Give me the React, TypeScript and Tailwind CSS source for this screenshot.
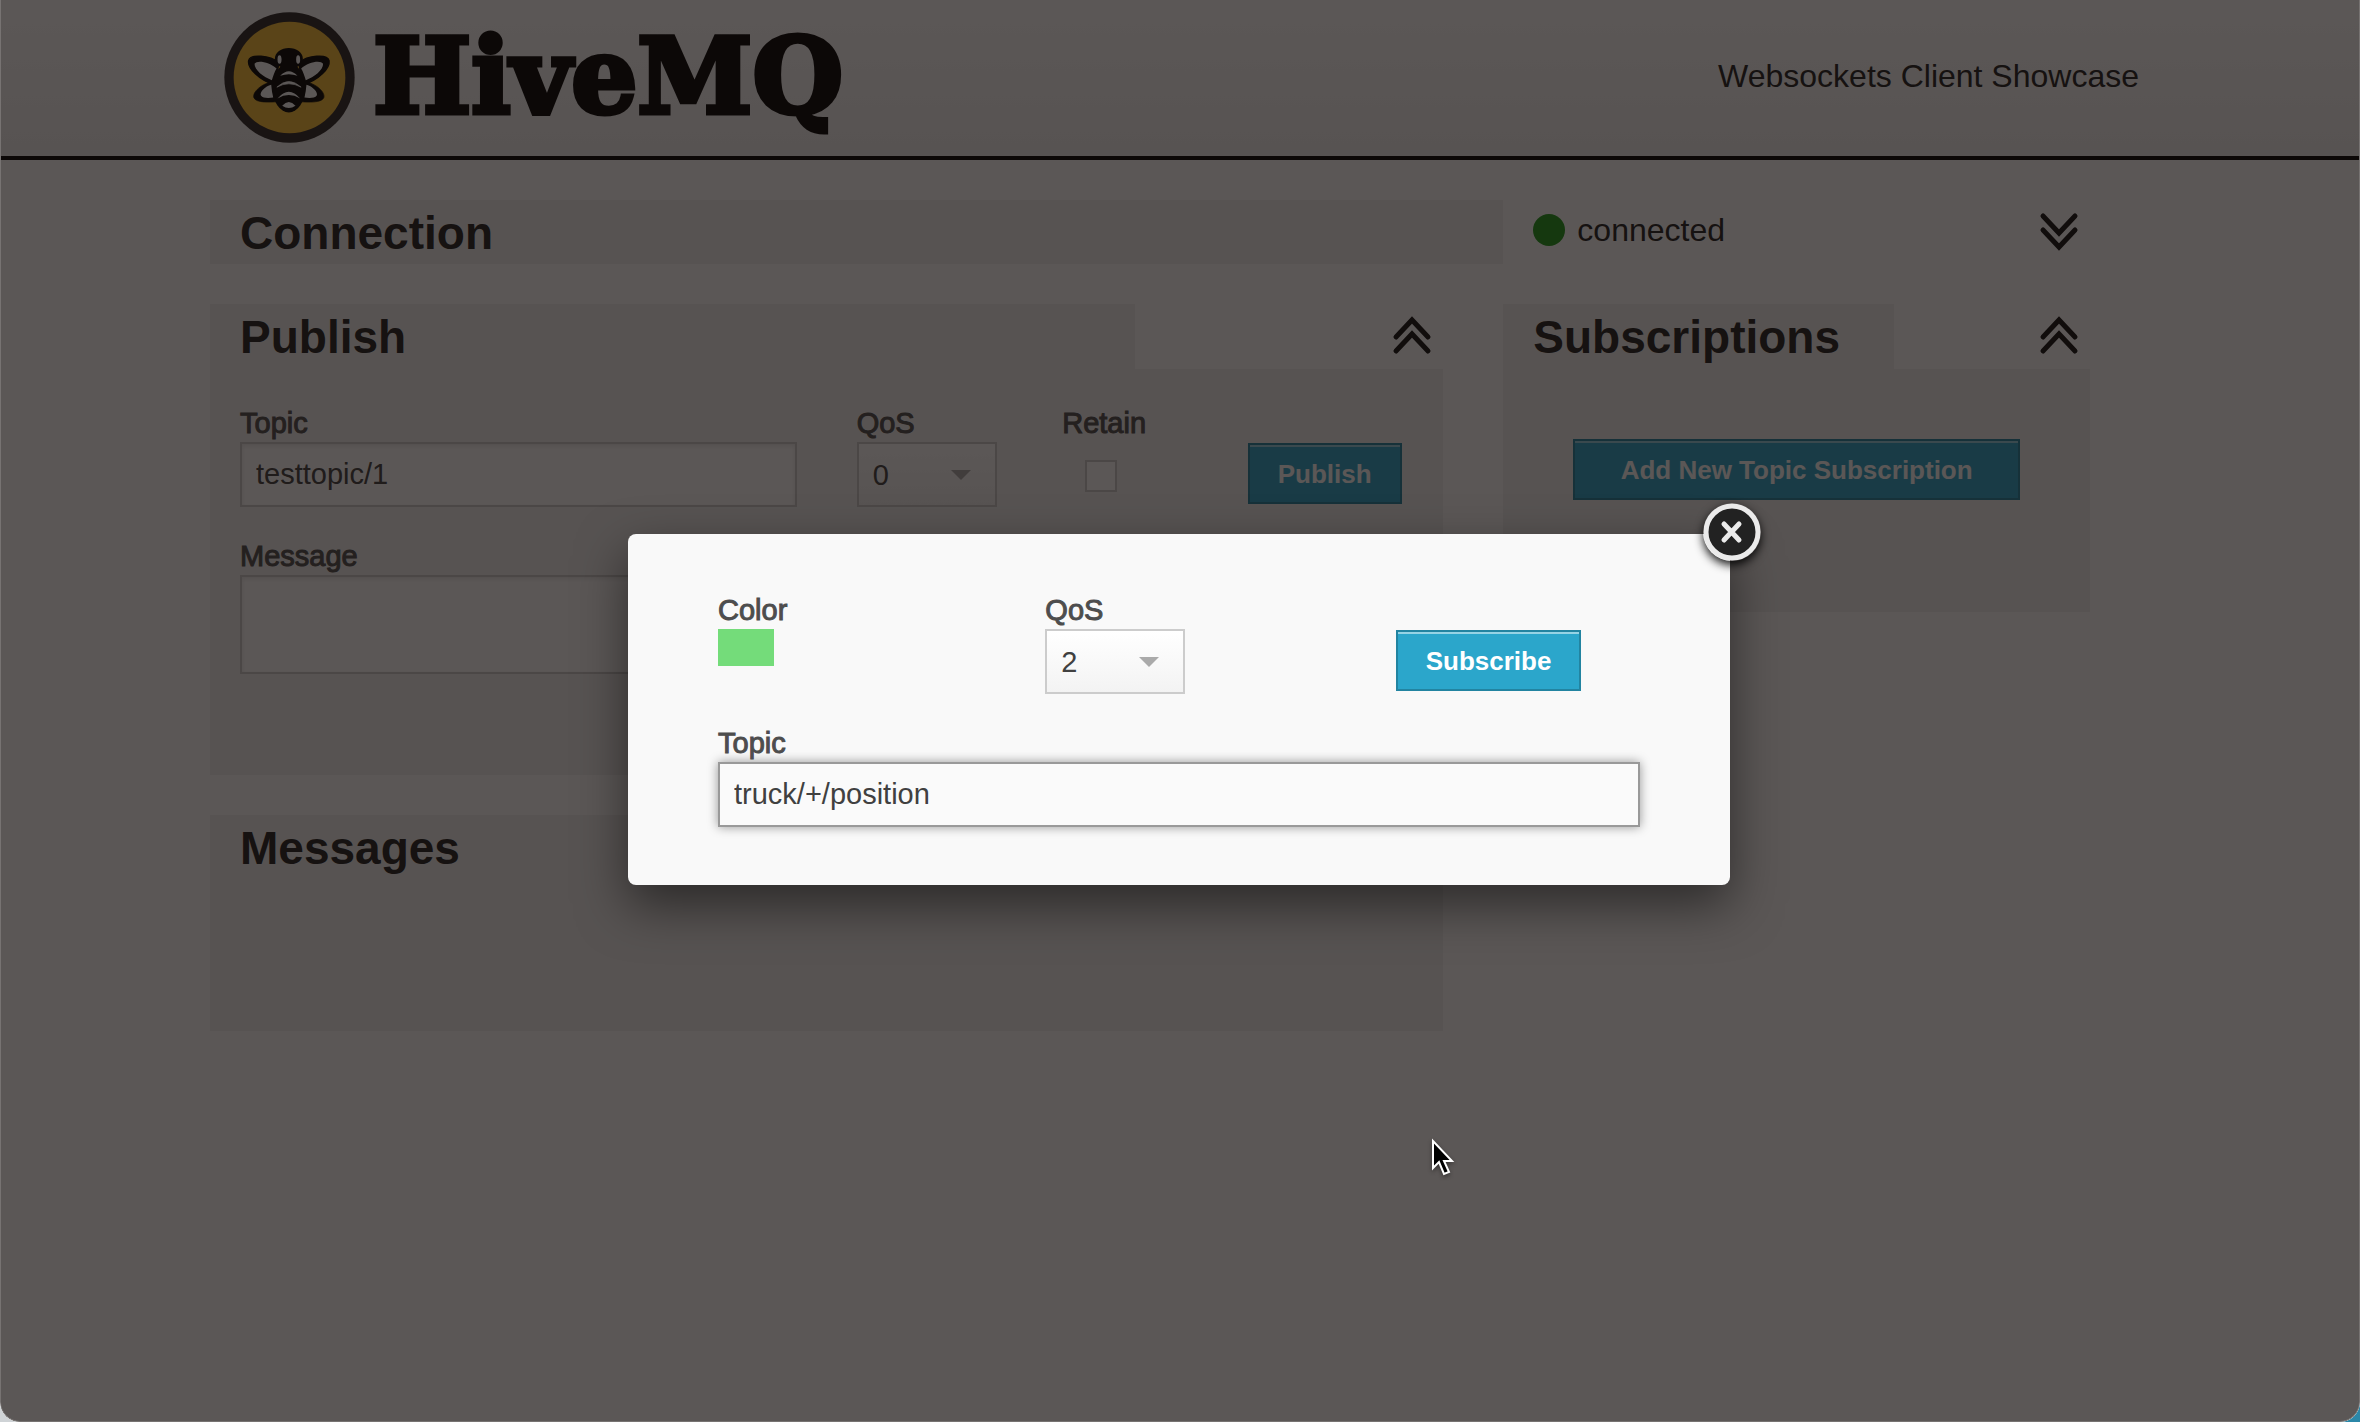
import React from "react";

const inputClass =
  "block w-full rounded-none border-2 border-[#ccc] bg-white px-[14px] text-[29px] text-[#404040] shadow-[inset_0_2px_4px_rgba(0,0,0,0.1)] outline-none";
const buttonClass =
  "h-[61px] border-2 border-[#2284a1] bg-[#2ba6cb] px-7 text-[26px] font-bold leading-none text-white shadow-[inset_0_2px_0_rgba(255,255,255,0.5)] whitespace-nowrap";

function Label({ htmlFor, children }: { htmlFor: string; children: React.ReactNode }) {
  return (
    <label
      htmlFor={htmlFor}
      className="block w-fit text-[29px] leading-[38px] text-[#4d4d4d] [-webkit-text-stroke:1px_#4d4d4d]"
    >
      {children}
    </label>
  );
}

function QosSelect({ id, value }: { id: string; value: string }) {
  return (
    <div className="relative w-[140px]">
      <select
        id={id}
        defaultValue={value}
        className="block h-[65px] w-full appearance-none rounded-none border-2 border-[#ccc] bg-linear-to-b from-white to-[#f3f3f3] pl-[14px] pt-[2px] text-[29px] text-[#404040] outline-none"
      >
        <option>0</option>
        <option>1</option>
        <option>2</option>
      </select>
      <svg
        className="pointer-events-none absolute right-[26px] top-[28px] h-[10px] w-[20px]"
        viewBox="0 0 20 10"
        aria-hidden="true"
      >
        <path d="M0 0H20L10 10Z" fill="#aaa" />
      </svg>
    </div>
  );
}

function Chevrons({ down = false, label }: { down?: boolean; label: string }) {
  return (
    <button type="button" aria-label={label} className="block">
      <svg
        className="h-[40px] w-[40px]"
        viewBox="0 0 40 40"
        fill="none"
        stroke="#111"
        strokeWidth="5"
        strokeLinecap="round"
      >
        {down ? (
          <path d="M4 4L20 21L36 4M4 18L20 35L36 18" />
        ) : (
          <path d="M4 22L20 5L36 22M4 36L20 19L36 36" />
        )}
      </svg>
    </button>
  );
}

function Wings() {
  return (
    <>
      <path
        d="M192 172C165 150 106 145 101 166C97 188 132 226 182 240Z"
        fill="#000"
        stroke="#000"
        strokeWidth="4"
      />
      <path
        d="M185 190C165 171 126 163 119 176C118 194 146 217 171 225C175 212 179 200 185 190Z"
        fill="#fff"
      />
      <path
        d="M178 228C140 234 111 262 117 278C124 294 165 291 186 290Z"
        fill="#000"
        stroke="#000"
        strokeWidth="2"
      />
      <path
        d="M169 239C151 243 133 262 138 271C144 280 163 279 175 277C172 265 170 252 169 239Z"
        fill="#fff"
      />
    </>
  );
}

function Bee() {
  return (
    <svg className="h-[131px] w-[131px] shrink-0" viewBox="27 20 394 394" aria-hidden="true">
      <circle cx="224" cy="217" r="196" fill="#2b2727" />
      <circle cx="224" cy="217" r="168" fill="#fbc137" />
      <Wings />
      <g transform="translate(444 0) scale(-1 1)">
        <Wings />
      </g>
      <ellipse cx="222" cy="160" rx="42" ry="32" fill="#000" />
      <ellipse cx="194" cy="163" rx="6" ry="13" fill="#fff" />
      <ellipse cx="250" cy="163" rx="6" ry="13" fill="#fff" />
      <ellipse cx="222" cy="248" rx="49" ry="74" fill="#000" />
      <path d="M196 212Q222 184 248 212Q222 202 196 212Z" fill="#fff" />
      <path d="M186 246Q222 212 259 246Q222 226 186 246Z" fill="#fff" stroke="#fff" strokeWidth="2" />
      <path d="M188 280Q222 240 256 280Q222 260 188 280Z" fill="#fff" />
      <path d="M202 302Q222 280 242 302Q222 316 202 302Z" fill="#fff" />
    </svg>
  );
}

function Heading({ children }: { children: React.ReactNode }) {
  return <h2 className="text-[46px] font-bold leading-[67px] text-[#222]">{children}</h2>;
}

function Header() {
  return (
    <header className="border-b-4 border-black bg-linear-to-b from-white to-[#f2f2f2]">
      <div className="mx-auto flex h-[156px] max-w-[1940px] items-center justify-between pl-[14px] pr-[11px]">
        <a href="#" className="flex items-center gap-[18px] pb-[2px]">
          <Bee />
          <span className="font-['DejaVu_Serif',serif] text-[104px] font-bold leading-none text-black [-webkit-text-stroke:5px_#000]">
            HiveMQ
          </span>
        </a>
        <p className="pb-1 text-[32px] text-[#222]">Websockets Client Showcase</p>
      </div>
    </header>
  );
}

function Page() {
  return (
    <div className="min-h-screen bg-white">
      <Header />
      <main className="mx-auto grid max-w-[1940px] grid-cols-3 gap-y-10 pt-10">
        <section className="col-span-3 grid grid-cols-3">
          <div className="col-span-2 h-[64px] bg-[#f2f2f2] px-[30px]">
            <Heading>Connection</Heading>
          </div>
          <div className="flex items-center justify-between pl-[30px] pr-[71px]">
            <div className="flex items-center gap-3 pb-1">
              <span className="h-8 w-8 rounded-full bg-[#1f9b1b]" />
              <span className="text-[32px] leading-none text-[#222]">connected</span>
            </div>
            <Chevrons down label="Show connection" />
          </div>
        </section>

        <div className="col-span-2 space-y-10 pr-[60px]">
          <section>
            <div className="flex justify-between">
              <div className="h-[65px] w-3/4 bg-[#f2f2f2] px-[30px]">
                <Heading>Publish</Heading>
              </div>
              <div className="pr-[11px] pt-[11px]">
                <Chevrons label="Hide publish" />
              </div>
            </div>
            <form className="grid min-h-[406px] grid-cols-12 content-start gap-y-[30px] bg-[#f2f2f2] pt-[35px]">
              <div className="col-span-6 px-[30px]">
                <Label htmlFor="pub-topic">Topic</Label>
                <input id="pub-topic" className={`${inputClass} h-[65px]`} defaultValue="testtopic/1" />
              </div>
              <div className="col-span-2 px-[30px]">
                <Label htmlFor="pub-qos">QoS</Label>
                <QosSelect id="pub-qos" value="0" />
              </div>
              <div className="col-span-2 px-[30px]">
                <Label htmlFor="retain">Retain</Label>
                <input
                  id="retain"
                  type="checkbox"
                  className="ml-[23px] mt-[18px] block h-8 w-8 appearance-none border-2 border-[#ccc] bg-white"
                />
              </div>
              <div className="col-span-2 pl-[10px] pt-[39px]">
                <button type="button" className={buttonClass}>
                  Publish
                </button>
              </div>
              <div className="col-span-12 px-[30px]">
                <Label htmlFor="message">Message</Label>
                <textarea id="message" className={`${inputClass} h-[99px] resize-none`} />
              </div>
            </form>
          </section>
          <section className="min-h-[216px] bg-[#f2f2f2] px-[30px]">
            <Heading>Messages</Heading>
          </section>
        </div>

        <section className="pr-[60px]">
          <div className="flex justify-between">
            <div className="h-[65px] w-2/3 bg-[#f2f2f2] px-[30px]">
              <Heading>Subscriptions</Heading>
            </div>
            <div className="pr-[11px] pt-[11px]">
              <Chevrons label="Hide subscriptions" />
            </div>
          </div>
          <div className="flex justify-center bg-[#f2f2f2] pb-[112px] pt-[70px]">
            <button type="button" className={`${buttonClass} w-[447px]`}>
              Add New Topic Subscription
            </button>
          </div>
        </section>
      </main>
    </div>
  );
}

function SubscribeDialog() {
  return (
    <div
      role="dialog"
      aria-label="Add New Topic Subscription"
      className="relative w-[1102px] rounded-lg bg-[#f9f9f9] px-[90px] pb-[58px] pt-[57px] shadow-[0_20px_50px_rgba(0,0,0,0.5)]"
    >
      <button
        type="button"
        aria-label="Close"
        className="absolute -right-[31px] -top-[31px] h-[58px] w-[58px] rounded-full shadow-[0_4px_10px_rgba(0,0,0,0.9)]"
      >
        <svg className="h-full w-full" viewBox="0 0 58 58">
          <circle cx="29" cy="29" r="26" fill="#222" stroke="#ebebeb" strokeWidth="5" />
          <path
            d="M21 21L36 37M36 21L21 37"
            stroke="#ebebeb"
            strokeWidth="5"
            strokeLinecap="round"
          />
        </svg>
      </button>
      <form className="grid grid-cols-3 gap-x-[60px] gap-y-[30px]">
        <div>
          <Label htmlFor="color">Color</Label>
          <button id="color" type="button" aria-label="Color" className="block h-[37px] w-[56px] bg-[#74dc7a]" />
        </div>
        <div>
          <Label htmlFor="sub-qos">QoS</Label>
          <QosSelect id="sub-qos" value="2" />
        </div>
        <div className="pl-[23px] pt-[39px]">
          <button type="button" className={buttonClass}>
            Subscribe
          </button>
        </div>
        <div className="col-span-3">
          <Label htmlFor="sub-topic">Topic</Label>
          <input
            id="sub-topic"
            defaultValue="truck/+/position"
            className="block h-[65px] w-full border-2 border-[#999] bg-[#fafafa] px-[14px] text-[29px] text-[#404040] shadow-[0_0_10px_rgba(0,0,0,0.4)] outline-none"
          />
        </div>
      </form>
    </div>
  );
}

export default function App() {
  return (
    <div className="relative min-h-screen bg-[linear-gradient(to_right,#cfd3d6_50%,#2b87a8_50%)] font-['Liberation_Sans',Arial,sans-serif]">
      <div className="relative min-h-screen overflow-hidden rounded-b-[20px]">
        <Page />
        <div className="absolute inset-0 flex items-center justify-center rounded-b-[20px] border-x border-b border-[#777372] bg-[rgb(17_12_10/0.69)] pb-[2px] pr-[2px]">
          <SubscribeDialog />
        </div>
      </div>
      <svg
        className="pointer-events-none absolute left-[1429px] top-[1136px] h-[42px] w-[30px] drop-shadow-[0_2px_2px_rgba(0,0,0,0.4)]"
        viewBox="0 0 30 42"
        aria-hidden="true"
      >
        <path
          d="M4 5V32L10 26L15 38L20 36L15 25H23Z"
          fill="#000"
          stroke="#fff"
          strokeWidth="2"
        />
      </svg>
    </div>
  );
}
